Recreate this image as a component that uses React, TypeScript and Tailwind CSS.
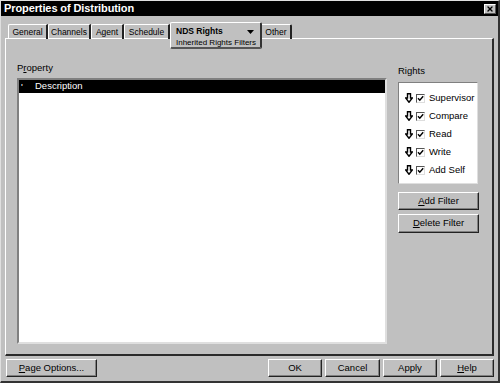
import { X } from "lucide-react";

const font = { fontFamily: '"Liberation Sans", Arial, sans-serif' };

const tabs = [
  { label: "General", w: "w-[40px]" },
  { label: "Channels", w: "w-[43px]" },
  { label: "Agent", w: "w-[33px]" },
  { label: "Schedule", w: "w-[46px]" },
];

const rights = ["Supervisor", "Compare", "Read", "Write", "Add Self"];

const DownArrow = () => (
  <svg width="8" height="10" viewBox="0 0 8 10" className="shrink-0">
    <path
      d="M2.5 0.7 H5.5 V5 H7.4 L4 9.3 L0.6 5 H2.5 Z"
      fill="white"
      stroke="black"
      strokeWidth="1.4"
      strokeLinejoin="miter"
    />
  </svg>
);

const CheckBox = () => (
  <div className="w-[9px] h-[9px] bg-white border border-t-[#555] border-l-[#555] border-r-[#ddd] border-b-[#ddd] flex items-center justify-center shrink-0">
    <svg width="7" height="7" viewBox="0 0 7 7">
      <path d="M1 3.2 L2.8 5.2 L6.2 1.2" fill="none" stroke="black" strokeWidth="1.4" />
    </svg>
  </div>
);

const Button = ({
  children,
  className = "",
}: {
  children: React.ReactNode;
  className?: string;
}) => (
  <button
    type="button"
    className={`h-[18px] bg-[#c0c0c0] border border-t-white border-l-white border-r-[#222] border-b-[#222] shadow-[inset_-1px_-1px_0_#808080] text-[9.5px] text-black flex items-center justify-center ${className}`}
  >
    {children}
  </button>
);

export default function App() {
  return (
    <div
      style={font}
      className="w-[500px] h-[383px] bg-[#c0c0c0] flex flex-col overflow-hidden border-t border-l border-t-[#dfdfdf] border-l-[#dfdfdf] border-r-2 border-b-2 border-r-[#333] border-b-[#333]"
    >
      {/* title bar */}
      <div className="h-[15px] bg-black flex items-center justify-between pl-[3px] pr-[2px] shrink-0">
        <span className="text-white font-bold text-[11px] leading-none tracking-[-0.1px]">
          Properties of Distribution
        </span>
        <div className="w-[12px] h-[10px] bg-[#c0c0c0] border border-t-white border-l-white border-r-[#555] border-b-[#555] flex items-center justify-center">
          <X className="w-[8px] h-[8px] text-black" strokeWidth={4} />
        </div>
      </div>

      {/* tab row */}
      <div className="mt-[7px] h-[15px] flex items-start pl-[7px] shrink-0 relative z-10">
        {tabs.map((t) => (
          <div
            key={t.label}
            className={`${t.w} h-[15px] mt-[1px] border-t border-l border-t-white border-l-white border-r-2 border-r-[#222] rounded-tl-[2px] flex items-center justify-center text-[8.5px] text-black`}
          >
            {t.label}
          </div>
        ))}
        <div className="w-[92px] h-[27px] -mt-[1px] bg-[#c0c0c0] border-t border-l border-t-white border-l-white border-r-2 border-b-2 border-r-[#333] border-b-[#555] rounded-[2px] flex flex-col pl-[5px] pr-[6px] pt-[3px]">
          <div className="flex items-center justify-between">
            <span className="font-bold text-[8.5px] leading-[11px] text-black">NDS Rights</span>
            <svg width="7" height="4" viewBox="0 0 7 4">
              <path d="M0 0 H7 L3.5 4 Z" fill="black" />
            </svg>
          </div>
          <span className="text-[8px] leading-[11px] text-black whitespace-nowrap">
            Inherited Rights Filters
          </span>
        </div>
        <div className="w-[30px] h-[15px] mt-[1px] border-t border-t-white border-r-2 border-r-[#222] rounded-tr-[2px] flex items-center justify-center text-[8.5px] text-black">
          Other
        </div>
      </div>

      {/* panel */}
      <div className="flex-1 mx-[4px] flex border-t border-l border-t-white border-l-white border-r-2 border-b-2 border-r-[#2a2a2a] border-b-[#2a2a2a] min-h-0">
        <div className="flex flex-col pl-[11px] pt-[23px] pb-[10px]">
          <div className="text-[9.5px] leading-[12px] text-black mb-[4px]">
            P<span className="underline">r</span>operty
          </div>
          <div className="w-[370px] flex-1 bg-white border-2 border-t-[#808080] border-l-[#808080] border-r-[#dfdfdf] border-b-[#dfdfdf]">
            <div className="h-[13px] bg-black flex items-center text-white text-[9.5px]">
              <span className="w-[16px] pl-[2px] leading-none">'</span>
              <span>Description</span>
            </div>
          </div>
        </div>

        <div className="flex flex-col pl-[11px] pt-[26px]">
          <div className="text-[9.5px] leading-[12px] text-black mb-[5px]">Rights</div>
          <div className="w-[80px] h-[102px] bg-white border border-t-[#808080] border-l-[#808080] border-r-[#dfdfdf] border-b-[#dfdfdf] pt-[6px] pl-[6px]">
            {rights.map((r) => (
              <div key={r} className="h-[18px] flex items-center gap-[3px]">
                <DownArrow />
                <CheckBox />
                <span className="text-[9.5px] text-black ml-[1px]">{r}</span>
              </div>
            ))}
          </div>
          <Button className="w-[81px] mt-[8px]">
            <span className="underline">A</span>dd Filter
          </Button>
          <Button className="w-[81px] mt-[4px] h-[19px]">
            <span className="underline">D</span>elete Filter
          </Button>
        </div>
      </div>

      {/* bottom buttons */}
      <div className="h-[25px] flex items-start pt-[3px] pl-[5px] pr-[4px] shrink-0">
        <Button className="w-[91px]">
          <span className="underline">P</span>age Options...
        </Button>
        <div className="flex-1" />
        <div className="flex gap-[3px]">
          <Button className="w-[54px]">OK</Button>
          <Button className="w-[55px]">Cancel</Button>
          <Button className="w-[54px]">Apply</Button>
          <Button className="w-[54px]">
            <span className="underline">H</span>elp
          </Button>
        </div>
      </div>
    </div>
  );
}
